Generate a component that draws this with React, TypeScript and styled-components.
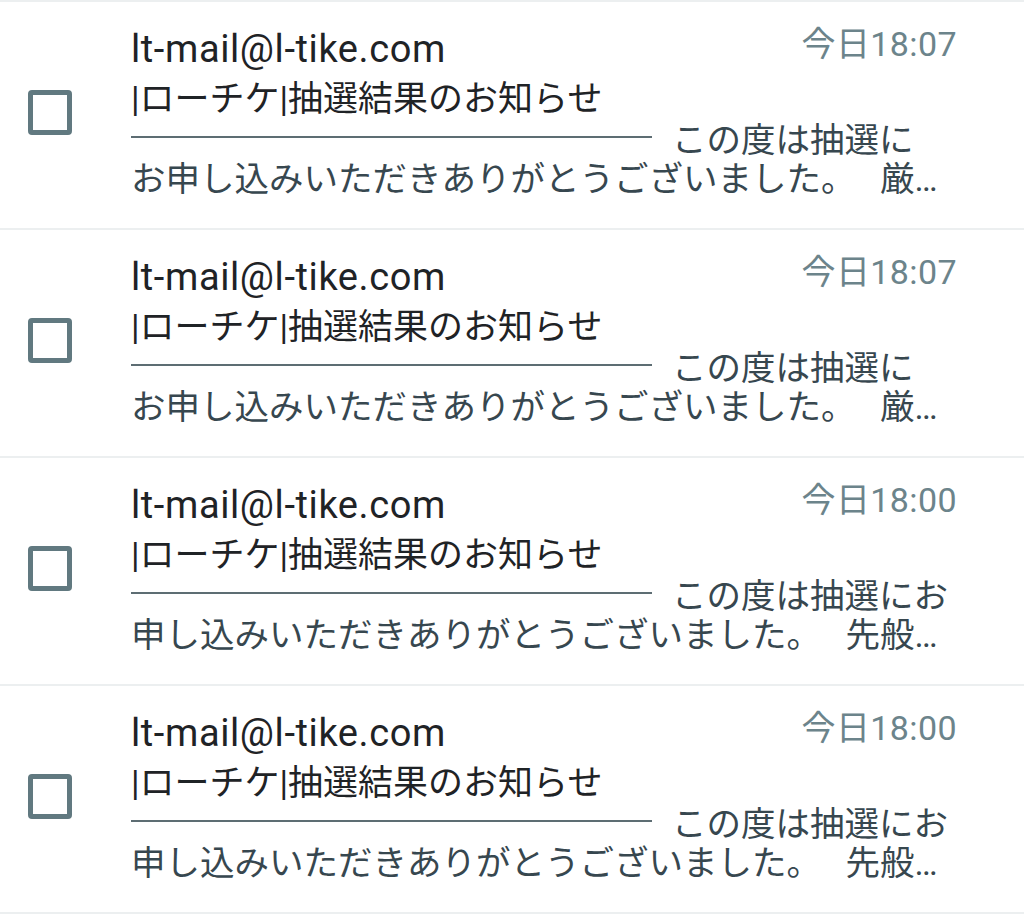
import React from "react";
import styled, { createGlobalStyle } from "styled-components";

const GlobalStyle = createGlobalStyle`
  html, body {
    margin: 0;
    padding: 0;
    background: #ffffff;
  }
  body {
    font-family: Roboto, "Noto Sans CJK JP", sans-serif;
    -webkit-font-smoothing: antialiased;
  }
`;

const List = styled.div`
  display: flex;
  flex-direction: column;
  border-top: 2px solid #eceff0;
`;

const Row = styled.div`
  display: grid;
  grid-template-columns: 131px 1fr;
  height: 226px;
  border-bottom: 2px solid #eceff0;
`;

const CheckCell = styled.div`
  display: flex;
  align-items: center;
  padding-left: 28px;
  padding-bottom: 5px;
`;

const Checkbox = styled.span`
  display: block;
  width: 44px;
  height: 45px;
  box-sizing: border-box;
  border: 5px solid #617980;
  border-radius: 4px;
`;

const Content = styled.div`
  display: flex;
  flex-direction: column;
  padding-top: 22px;
  padding-right: 67px;
  min-width: 0;
`;

const Header = styled.div`
  display: flex;
  justify-content: space-between;
  align-items: flex-start;
  height: 55px;
`;

const Sender = styled.span`
  font-size: 38px;
  line-height: 50px;
  color: #1f2326;
  letter-spacing: 0.6px;
`;

const Time = styled.span`
  font-size: 34px;
  line-height: 41px;
  color: #6c848b;
  letter-spacing: 0.4px;
`;

const Subject = styled.div`
  font-size: 35px;
  line-height: 41px;
  color: #1f2326;
  white-space: nowrap;
`;

const PreviewLine = styled.div<{ $lh: number }>`
  font-size: 34.5px;
  line-height: ${(p) => p.$lh}px;
  color: #37474f;
  white-space: nowrap;
  word-spacing: 16px;
  overflow: hidden;
`;

const Rule = styled.span`
  display: inline-block;
  width: 521px;
  height: 2px;
  background: #5d6d73;
  vertical-align: 14px;
  margin-right: 20px;
`;

type Mail = {
  time: string;
  line1: string;
  line2: string;
};

const mails: Mail[] = [
  {
    time: "今日18:07",
    line1: "この度は抽選に",
    line2: "お申し込みいただきありがとうございました。 厳…",
  },
  {
    time: "今日18:07",
    line1: "この度は抽選に",
    line2: "お申し込みいただきありがとうございました。 厳…",
  },
  {
    time: "今日18:00",
    line1: "この度は抽選にお",
    line2: "申し込みいただきありがとうございました。 先般…",
  },
  {
    time: "今日18:00",
    line1: "この度は抽選にお",
    line2: "申し込みいただきありがとうございました。 先般…",
  },
];

export default function App() {
  return (
    <>
      <GlobalStyle />
      <List>
        {mails.map((m, i) => (
          <Row key={i}>
            <CheckCell>
              <Checkbox role="checkbox" aria-checked="false" />
            </CheckCell>
            <Content>
              <Header>
                <Sender>lt-mail@l-tike.com</Sender>
                <Time>{m.time}</Time>
              </Header>
              <Subject>|ローチケ|抽選結果のお知らせ</Subject>
              <PreviewLine $lh={40}>
                <Rule aria-hidden="true" />
                {m.line1}
              </PreviewLine>
              <PreviewLine $lh={38}>{m.line2}</PreviewLine>
            </Content>
          </Row>
        ))}
      </List>
    </>
  );
}
